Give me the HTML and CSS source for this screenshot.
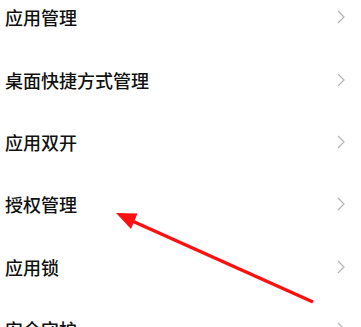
FILE: index.html
```html
<!DOCTYPE html>
<html lang="zh-CN">
<head>
    <meta charset="UTF-8">
    <meta name="viewport" content="width=device-width, initial-scale=1.0">
    <title>应用设置</title>
    <link rel="stylesheet" href="styles.css">
</head>
<body>
    <div class="screen">
        <ul class="menu">
            <li class="menu-item"><span>应用管理</span><svg class="chevron" viewBox="0 0 8 14"><polyline points="1,1 7,7 1,13"/></svg></li>
            <li class="menu-item"><span>桌面快捷方式管理</span><svg class="chevron" viewBox="0 0 8 14"><polyline points="1,1 7,7 1,13"/></svg></li>
            <li class="menu-item"><span>应用双开</span><svg class="chevron" viewBox="0 0 8 14"><polyline points="1,1 7,7 1,13"/></svg></li>
            <li class="menu-item"><span>授权管理</span><svg class="chevron" viewBox="0 0 8 14"><polyline points="1,1 7,7 1,13"/></svg></li>
            <li class="menu-item"><span>应用锁</span><svg class="chevron" viewBox="0 0 8 14"><polyline points="1,1 7,7 1,13"/></svg></li>
            <li class="menu-item"><span>安全守护</span><svg class="chevron" viewBox="0 0 8 14"><polyline points="1,1 7,7 1,13"/></svg></li>
        </ul>

        <!-- annotation arrow pointing at 授权管理 -->
        <svg class="annotation" viewBox="0 0 361 327">
            <line x1="313" y1="302" x2="130" y2="220"/>
            <polygon points="116,213 137.5,213.5 131,229"/>
        </svg>
    </div>
</body>
</html>
```

FILE: styles.css
```css
body {
    margin: 0;
    background: #fff;
    font-family: "Noto Sans CJK SC", "Noto Sans", sans-serif;
    color: #111;
}
.screen {
    position: relative;
    width: 361px;
    height: 327px;
    overflow: hidden;
}
.menu {
    list-style: none;
    margin: -14px 0 0 0;
    padding: 0;
}
.menu-item {
    display: flex;
    align-items: center;
    justify-content: space-between;
    height: 62.4px;
    padding: 0 16px 0 5px;
    font-size: 18px;
    font-weight: 500;
}
.chevron {
    width: 8px;
    height: 14px;
    fill: none;
    stroke: #b4b4b4;
    stroke-width: 1.2;
}
.annotation {
    position: absolute;
    left: 0;
    top: 0;
    width: 361px;
    height: 327px;
}
.annotation line {
    stroke: #ff1010;
    stroke-width: 3.5;
}
.annotation polygon {
    fill: #ff1010;
}
```
